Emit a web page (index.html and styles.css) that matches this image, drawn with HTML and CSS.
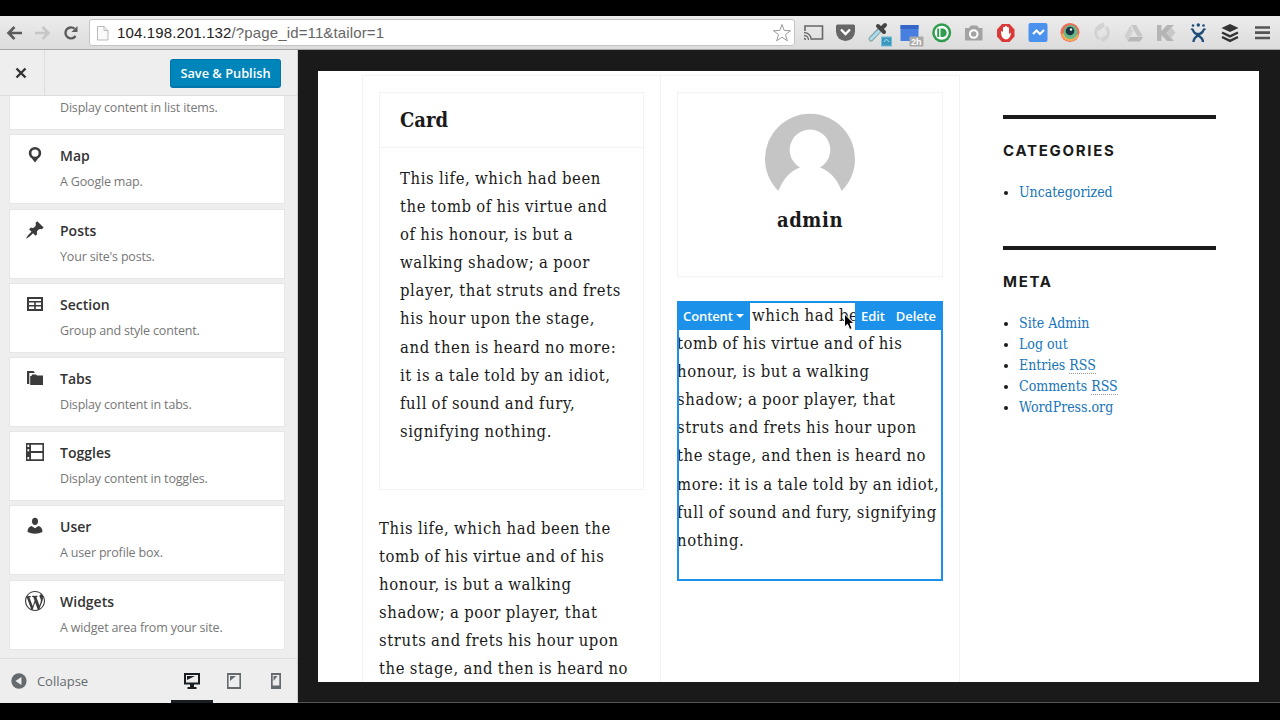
FILE: index.html
```html
<!DOCTYPE html>
<html lang="en">
<head>
<meta charset="utf-8">
<title>Tailor</title>
<link rel="stylesheet" href="styles.css">
</head>
<body>
<div class="screen">
  <header class="toolbar">
    <svg class="nav" width="90" height="32" viewBox="0 0 90 32" fill="none">
      <path d="M22 17H8.500M14.500 11L8.500 17L14.500 23" stroke="#5b5b5b" stroke-width="2.600"/>
      <path d="M35 17H48.500M42.500 11L48.500 17L42.500 23" stroke="#c6c6c6" stroke-width="2.600"/>
      <path d="M75.500 20A5.500 5.500 0 1 1 74.500 12.700" stroke="#5b5b5b" stroke-width="2.400"/>
      <path d="M77.500 10V16H71.500Z" fill="#5b5b5b"/>
    </svg>
    <div class="address">
      <svg width="14" height="16" viewBox="0 0 14 16" fill="#fafafa" stroke="#bbb"><path d="M1.500 1.500H8L12 5.500V15H1.500ZM8 1.500V5.500H12"/></svg>
      <span class="url">104.198.201.132<span class="path">/?page_id=11&amp;tailor=1</span></span>
      <svg class="star" width="20" height="20" viewBox="0 0 20 20" fill="#fff" stroke="#999"><path d="M10 1.500L12.200 7.500L18.500 7.700L13.500 11.600L15.300 17.800L10 14.200L4.700 17.800L6.500 11.600L1.500 7.700L7.800 7.500Z"/></svg>
    </div>
    <svg class="ext" width="480" height="34" viewBox="800 16 480 34" fill="none">
      <path d="M805 31V26H822.500V39H812" stroke="#666" stroke-width="1.600"/>
      <path d="M804 38.500a1.500 1.500 0 0 1 1.500 1.500M804 35.500a4.500 4.500 0 0 1 4.500 4.500M804 32.700a7 7 0 0 1 7.300 7.300" stroke="#666" stroke-width="1.300"/>
      <path d="M836 26Q836 24.500 837.500 24.500H853.500Q855 24.500 855 26V31.500A9.500 9.500 0 0 1 836 31.500Z" fill="#666"/>
      <path d="M841 29.500L845.500 34L850 29.500" stroke="#fff" stroke-width="2.400"/>
      <path d="M871 39L880 29.500" stroke="#849ca5" stroke-width="5" stroke-linecap="round"/><path d="M871 39L879.500 30.500" stroke="#a9dceb" stroke-width="3" stroke-linecap="round"/>
      <path d="M878 26L884 32M881.500 28.500L885 25" stroke="#444" stroke-width="4" stroke-linecap="round"/>
      <rect x="881.500" y="37" width="10" height="9" fill="#3d98bd" stroke="#74bcd8"/><path d="M884 42L886.500 39L889 42" stroke="#a9dced"/>
      <rect x="900.500" y="25" width="18" height="16" fill="#467fe0"/><path d="M900.500 25H918.500V29H900.500Z" fill="#3566c8"/>
      <rect x="909.500" y="36.500" width="14" height="10" rx="1" fill="#aaa"/><text x="911" y="45" class="badge">2h</text>
      <circle cx="941.700" cy="32.700" r="9.500" fill="#319c50"/><circle cx="941.700" cy="32.700" r="7" fill="#fff"/><rect x="937.200" y="28.500" width="2" height="8.500" fill="#319c50"/><path d="M940.500 28.500H942.500A4.200 4.200 0 0 1 942.500 37H940.500Z" fill="#319c50"/>
      <path d="M965 28H969L971 25.500H977L979 28H982.500V40.500H965Z" fill="#a3a3a3"/><circle cx="973.700" cy="34" r="3.800" stroke="#fff" stroke-width="2"/>
      <path d="M1002 24H1009.500L1014.500 29.500V36.500L1009.500 42H1002L997 36.500V29.500Z" fill="#d93a38"/><path d="M1001 32Q1001 30 1003 32V27.500Q1004 26 1005 27.500V26.500Q1006 25 1007 26.500V27.500Q1008 26.500 1009 28V34.500Q1010 32 1011 33Q1010 39 1006 39.500Q1001 39 1001 32Z" fill="#fff"/>
      <rect x="1028.500" y="23" width="19" height="19" rx="2" fill="#4b92ee"/><path d="M1033 34L1036.500 30.500L1040 34L1044 30" stroke="#fff" stroke-width="2.200"/>
      <circle cx="1070" cy="32.500" r="9.500" fill="#ef6a55"/><path d="M1061 34A9.500 9.500 0 0 0 1079 35L1070 32Z" fill="#f2aa55"/><circle cx="1070.500" cy="32" r="7" fill="#67b68a"/><circle cx="1070" cy="31" r="4.300" fill="#173440"/><circle cx="1071" cy="29.500" r="1.200" fill="#fff"/>
      <path d="M1099 39A8 8 0 0 1 1100 25.500L1104 24M1106 27A8 8 0 0 1 1106 38.500L1101.500 41M1098 30L1104 25M1107 36L1101 40" stroke="#d2d2d2" stroke-width="3"/>
      <path d="M1131 25H1136L1143 36.500H1137.500Z" fill="#c6c6c6"/><path d="M1130 26L1133 31L1127.500 41L1124.500 36Z" fill="#d0d0d0"/><path d="M1130 37H1143L1140 41.500H1127.500Z" fill="#b7b7b7"/>
      <path d="M1157 25H1161.500V31L1167 25H1174L1166.500 33L1174 41H1167L1161.500 35V41H1157Z" fill="#b5b5b5"/><path d="M1171 27L1175.500 32.500L1171 38L1167 33Z" fill="#c8c8c8"/>
      <path d="M1191.500 30Q1192 29 1193 30Q1194 34 1198.200 34Q1202.400 34 1203.500 30Q1204.500 29 1205 30M1193.500 42Q1193.500 38 1198 35.500L1203 31.500M1193.500 31.500L1198 35.500Q1203 38 1203 42" stroke="#1c4d79" stroke-width="2.300"/><circle cx="1193" cy="25.500" r="1.300" fill="#1c4d79"/><circle cx="1198.300" cy="25" r="1.700" fill="#1c4d79"/><circle cx="1203.500" cy="25.500" r="1.300" fill="#1c4d79"/>
      <path d="M1230 24L1238.500 28L1230 32L1221.500 28Z" fill="#333"/><path d="M1222 32.500L1230 36.300L1238 32.500M1222 37L1230 40.800L1238 37" stroke="#333" stroke-width="2.400"/>
      <path d="M1255 27.500H1270M1255 32.700H1270M1255 38H1270" stroke="#555" stroke-width="2.700"/>
    </svg>
  </header>

  <main class="app">
    <aside class="sidebar">
      <div class="side-head">
        <div class="close"><svg width="12" height="12" viewBox="0 0 12 12"><path d="M1.500 1.500L10.500 10.500M10.500 1.500L1.500 10.500" stroke="#333" stroke-width="2.400"/></svg></div>
        <button class="publish">Save &amp; Publish</button>
      </div>
      <div class="elements">
        <div class="element"><span class="icon"></span><div><h3></h3><p>Display content in list items.</p></div></div>
        <div class="element"><svg class="icon" viewBox="0 0 20 20"><path fill-rule="evenodd" d="M10 2a6.200 6.200 0 0 1 6.200 6.200c0 2.200-1.400 4-2.900 5.100L10 17.500L6.700 13.300C5.200 12.200 3.800 10.400 3.800 8.200a6.200 6.200 0 0 1 6.200-6.200zm0 2.500a3.600 3.600 0 1 0 0 7.200a3.600 3.600 0 0 0 0-7.200z"/></svg><div><h3>Map</h3><p>A Google map.</p></div></div>
        <div class="element"><svg class="icon" viewBox="0 0 20 20"><path d="M10.440 3.020l1.820-1.820 6.360 6.350-1.830 1.820c-1.050-.68-2.480-.57-3.410.36l-.75.750c-.92.930-1.040 2.350-.35 3.410l-1.830 1.820-2.410-2.410-2.800 2.790c-.42.420-3.380 2.710-3.800 2.290s1.860-3.390 2.280-3.810l2.790-2.790L4.100 9.360l1.830-1.820c1.050.69 2.480.57 3.400-.36l.75-.75c.93-.92 1.050-2.350.36-3.410z"/></svg><div><h3>Posts</h3><p>Your site's posts.</p></div></div>
        <div class="element"><svg class="icon" viewBox="0 0 20 20"><path fill-rule="evenodd" d="M2 3H18V17H2ZM4 5V7H16V5ZM4 8.500V11H9.200V8.500ZM10.800 8.500V11H16V8.500ZM4 12.500V15H9.200V12.500ZM10.800 12.500V15H16V12.500Z"/></svg><div><h3>Section</h3><p>Group and style content.</p></div></div>
        <div class="element"><svg class="icon" viewBox="0 0 20 20"><path d="M2 3H8.500L10 5H4.300V16H2Z"/><path d="M5.200 8H6.500L7 6.500H11L12 7.500H18V17H5.200Z"/></svg><div><h3>Tabs</h3><p>Display content in tabs.</p></div></div>
        <div class="element"><svg class="icon" viewBox="0 0 20 20"><path fill-rule="evenodd" d="M1 1H19V19H1ZM6 2.700V9.100H17.400V2.700ZM6 10.900V17.300H17.400V10.900ZM2.400 2.700V5H4.200V2.700ZM2.400 7.200V9.300H4.200V7.200ZM2.400 15V17.300H4.200V15Z"/></svg><div><h3>Toggles</h3><p>Display content in toggles.</p></div></div>
        <div class="element"><svg class="icon" viewBox="0 0 20 20"><ellipse cx="10" cy="5.300" rx="3" ry="3.600"/><path d="M6.500 10L10 12.200L13.500 10C16 10.500 17.500 12.500 17.500 16Q14 17.700 10 17.700Q6 17.700 2.500 16C2.500 12.500 4 10.500 6.500 10Z"/></svg><div><h3>User</h3><p>A user profile box.</p></div></div>
        <div class="element"><svg class="icon" viewBox="0 0 20 20"><path d="M20 10c0-5.510-4.490-10-10-10C4.480 0 0 4.490 0 10c0 5.520 4.480 10 10 10 5.510 0 10-4.480 10-10zM7.780 15.370L4.370 6.220c.55-.02 1.170-.08 1.170-.08.5-.06.440-1.130-.06-1.110 0 0-1.450.110-2.370.110-.18 0-.370 0-.580-.010C4.120 2.690 6.870 1.110 10 1.110c2.330 0 4.450.870 6.050 2.340-.680-.110-1.650.390-1.650 1.580 0 .740.450 1.360.9 2.100.350.610.550 1.360.550 2.460 0 1.490-1.400 5-1.400 5l-3.030-8.370c.540-.020.820-.170.820-.170.5-.050.440-1.250-.060-1.220 0 0-1.440.120-2.380.120-.870 0-2.330-.120-2.330-.120-.5-.030-.560 1.200-.060 1.220l.920.080 1.260 3.410zM17.410 10c.240-.640.740-1.870.430-4.250.7 1.290 1.050 2.710 1.050 4.250 0 3.290-1.730 6.240-4.400 7.780.970-2.590 1.940-5.200 2.920-7.780zM6.100 18.090C3.120 16.650 1.110 13.530 1.110 10c0-1.300.230-2.480.720-3.590C3.250 10.300 4.670 14.200 6.100 18.090zm4.030-6.630l2.580 6.980c-.860.290-1.760.450-2.710.450-.790 0-1.570-.110-2.290-.330.810-2.380 1.620-4.740 2.420-7.100z"/></svg><div><h3>Widgets</h3><p>A widget area from your site.</p></div></div>
      </div>
      <footer class="side-foot">
        <svg width="16" height="16" viewBox="0 0 16 16"><circle cx="8" cy="8" r="7.700" fill="#656a6f"/><path d="M10.500 4V12L4.500 8Z" fill="#eee"/></svg>
        <span class="collapse">Collapse</span>
        <div class="devices">
          <span class="device active"><svg width="18" height="18" viewBox="0 0 18 18" fill="#191e23"><path fill-rule="evenodd" d="M1 1H17V12.500H11V15H13.500V17H4.500V15H7V12.500H1ZM3 3V10.500H15V3Z"/><path d="M4 4H12L4 8Z"/></svg></span>
          <span class="device"><svg width="18" height="18" viewBox="0 0 18 18" fill="#656a6f"><path fill-rule="evenodd" d="M2 1H16V17H2ZM3.600 3V15H14.400V3Z"/><path d="M5 4H11L5 9Z"/></svg></span>
          <span class="device"><svg width="18" height="18" viewBox="0 0 18 18" fill="#656a6f"><path fill-rule="evenodd" d="M4 1H14V17H4ZM5.700 3V13.500H12.300V3Z"/><path d="M6.500 4H10.500L6.500 9Z"/></svg></span>
        </div>
      </footer>
    </aside>

    <section class="stage">
      <div class="page">
        <div class="columns">
          <div class="column">
            <article class="card">
              <h2>Card</h2>
              <p class="prose">This life, which had been<br>the tomb of his virtue and<br>of his honour, is but a<br>walking shadow; a poor<br>player, that struts and frets<br>his hour upon the stage,<br>and then is heard no more:<br>it is a tale told by an idiot,<br>full of sound and fury,<br>signifying nothing.</p>
            </article>
            <p class="prose">This life, which had been the<br>tomb of his virtue and of his<br>honour, is but a walking<br>shadow; a poor player, that<br>struts and frets his hour upon<br>the stage, and then is heard no</p>
          </div>
          <div class="column second">
            <article class="profile">
              <svg width="90" height="90" viewBox="0 0 90 90"><path fill="#c5c5c5" d="M13.500 78A45 45 0 1 1 76.500 78Q70 60 55 54.500A20.300 20.300 0 1 0 35 54.500Q20 60 13.500 78Z"/></svg>
              <h2>admin</h2>
            </article>
            <div class="selected">
              <p class="prose">This life, which had been the<br>tomb of his virtue and of his<br>honour, is but a walking<br>shadow; a poor player, that<br>struts and frets his hour upon<br>the stage, and then is heard no<br>more: it is a tale told by an idiot,<br>full of sound and fury, signifying<br>nothing.</p>
              <div class="outline"></div>
              <div class="tools left">Content<i class="caret"></i></div>
              <div class="tools right"><span>Edit</span><span>Delete</span></div>
              <svg class="cursor" width="14" height="18" viewBox="0 0 14 18"><path d="M1.500 1V14L4.500 11.300L6.700 16.500L9.200 15.500L7 10.500H11Z" fill="#000" stroke="#fff"/></svg>
            </div>
          </div>
        </div>
        <aside class="widgets">
          <section class="widget"><h4>Categories</h4><ul><li><a>Uncategorized</a></li></ul></section>
          <section class="widget"><h4>Meta</h4><ul><li><a>Site Admin</a></li><li><a>Log out</a></li><li><a>Entries <abbr>RSS</abbr></a></li><li><a>Comments <abbr>RSS</abbr></a></li><li><a>WordPress.org</a></li></ul></section>
        </aside>
      </div>
    </section>
  </main>
</div>
</body>
</html>
```

FILE: styles.css
```css
* { box-sizing: border-box; }
body { margin: 0; background: #000; }
h2, h3, h4, p, ul { margin: 0; padding: 0; }
.screen { width: 1280px; height: 720px; padding-top: 16px; overflow: hidden; background: #000; display: flex; flex-direction: column; font-family: "Open Sans", sans-serif; }

.toolbar { height: 34px; flex: none; display: flex; background: linear-gradient(#ececec, #dcdcdc); border-bottom: 1px solid #a5a5a5; }
.nav { flex: none; }
.address { width: 706px; height: 27px; margin: 3px 5px 0 -1px; padding: 0 2px 0 6px; display: flex; align-items: center; background: #fff; border: 1px solid #c4c4c4; border-radius: 3px; }
.address svg { flex: none; }
.url { flex: 1; margin-left: 7px; font: 15px/24px "Liberation Sans", sans-serif; letter-spacing: .13px; color: #222; white-space: nowrap; }
.path { color: #666; }
.ext { flex: none; }
.badge { font: bold 9px "Liberation Sans", sans-serif; fill: #fff; }

.app { height: 653px; flex: none; display: flex; }
.sidebar { width: 298px; height: 653px; display: flex; flex-direction: column; background: #eee; border-right: 1px solid #ccc; }
.side-head { height: 46px; flex: none; display: flex; justify-content: space-between; border-bottom: 1px solid #ddd; }
.close { width: 45px; display: flex; align-items: center; justify-content: center; padding-right: 3px; border-right: 1px solid #ddd; }
.publish { width: 111px; height: 29px; margin: 9px 16px 0 0; padding: 0; font: 600 12.800px/26px "Open Sans", sans-serif; color: #fff; background: #0085ba; border: 1px solid #0073aa; border-bottom-width: 2px; border-radius: 3px; white-space: nowrap; }
.elements { height: 562px; flex: none; overflow: hidden; display: flex; flex-direction: column; justify-content: flex-end; gap: 4.200px; padding: 0 12px 8.500px 9px; }
.element { height: 70px; flex: none; display: flex; gap: 15px; padding: 10px 15px; background: #fff; border: 1px solid #e6e6e6; }
.icon { width: 20px; height: 20px; flex: none; fill: #3b3b3b; }
.element h3 { height: 22px; font: 600 14px/21px "Open Sans", sans-serif; color: #333; }
.element p { margin-top: 5px; font-size: 12.500px; line-height: 20px; letter-spacing: -.18px; color: #777; white-space: nowrap; }
.side-foot { flex: 1; display: flex; align-items: center; padding-left: 11px; border-top: 1px solid #ddd; }
.collapse { width: 123px; margin-left: 10px; font-size: 13px; color: #656a6f; }
.devices { display: flex; height: 44px; }
.device { width: 42px; height: 44px; display: flex; align-items: center; justify-content: center; border-bottom: 3px solid transparent; padding-top: 3px; }
.device.active { border-color: #191e23; margin-left: 12px; }

.stage { flex: 1; padding: 21px 21px 20px 20px; background: #1a1a1a; border-bottom: 1px solid #555; }
.page { width: 941px; height: 611px; overflow: hidden; display: flex; padding: 4px 43px 0 44px; background: #fff; }
.columns { width: 598px; height: 700px; flex: none; display: flex; border: 1px solid #f3f3f3; }
.column { width: 298px; padding: 16px 16px 0; border-right: 1px solid #f3f3f3; }
.second { width: 298px; padding: 16px 15px 0 16px; border-right: 0; }
.prose { padding-top: 1px; font: 16.500px/28.100px "DejaVu Serif Condensed", "DejaVu Serif", serif; font-stretch: condensed; letter-spacing: .61px; word-spacing: -.7px; color: #1a1a1a; white-space: nowrap; }
.card { height: 398px; margin-bottom: 24px; border: 1px solid #f3f3f3; }
.card h2 { height: 55px; padding-left: 20px; line-height: 54px; border-bottom: 1px solid #f3f3f3; }
.card .prose { padding: 17px 20px; }
.column h2 { font-family: "DejaVu Serif Condensed", "DejaVu Serif", serif; font-stretch: condensed; font-size: 20px; font-weight: 700; color: #1a1a1a; }
.profile { width: 266px; height: 185px; margin-bottom: 24px; padding-top: 20px; display: flex; flex-direction: column; align-items: center; border: 1px solid #f3f3f3; }
.profile h2 { line-height: 34px; letter-spacing: .6px; }
.selected { position: relative; width: 266px; height: 280px; }
.outline { position: absolute; inset: 0; border: 2px solid #1b91ea; }
.tools { position: absolute; top: 0; height: 29px; display: flex; align-items: center; background: #1b91ea; color: #fff; font-weight: 600; font-size: 13px; letter-spacing: -.1px; }
.left { left: 0; width: 73px; padding-left: 6px; gap: 3px; }
.right { right: 0; width: 88px; padding: 0 7px 0 6px; justify-content: space-between; }
.caret { border: 4px solid transparent; border-top-color: #fff; border-bottom: 0; }
.cursor { position: absolute; left: 166px; top: 12px; }

.widgets { width: 213px; margin: 40px 0 0 43px; }
.widget { height: 130.500px; border-top: 4px solid #1a1a1a; padding-top: 21px; }
.widget h4 { font: 700 15px/21px Inter, sans-serif; letter-spacing: 1.700px; text-transform: uppercase; color: #1a1a1a; }
.widget ul { margin: 21px 0 0 16px; font: 14px/21.100px "DejaVu Serif Condensed", "DejaVu Serif", serif; font-stretch: condensed; color: #1a1a1a; white-space: nowrap; }
.widget a { color: #1674b8; }
.widget abbr { text-decoration: none; border-bottom: 1px dotted #999; }
```
